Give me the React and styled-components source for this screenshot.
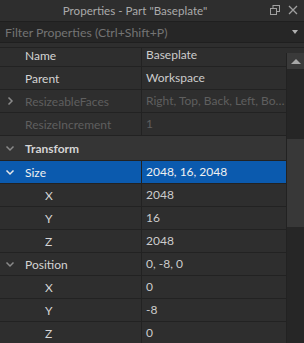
import React from 'react'
import styled, { createGlobalStyle } from 'styled-components'

const Global = createGlobalStyle`
  html, body { margin: 0; padding: 0; background: #2e2e2e; overflow: hidden; }
  body { font-family: Lato, "Noto Sans", sans-serif; }
`

const Panel = styled.div`
  width: 304px;
  height: 343px;
  display: flex;
  flex-direction: column;
  background: #2e2e2e;
  overflow: hidden;
`

const TitleBar = styled.div`
  height: 21px;
  flex: none;
  position: relative;
  display: flex;
  align-items: center;
  justify-content: center;
  padding-right: 34px;
  color: #aaaaaa;
  font-size: 11.6px;
  background: #2e2e2e;
`

const TitleIcons = styled.div`
  position: absolute;
  right: 6px;
  top: 5px;
  display: flex;
  gap: 8px;
`

const FilterBar = styled.div`
  height: 20px;
  flex: none;
  display: flex;
  align-items: center;
  justify-content: space-between;
  padding: 0 6px 0 5px;
  background: #262626;
  border-top: 1px solid #1f1f1f;
  border-bottom: 1px solid #1f1f1f;
  color: #747474;
  font-size: 12.3px;
`

const Caret = styled.div`
  width: 0;
  height: 0;
  border-left: 3px solid transparent;
  border-right: 3px solid transparent;
  border-top: 4px solid #b0b0b0;
`

const Body = styled.div`
  flex: 1;
  display: flex;
  margin-top: 4px;
  border-top: 1px solid #222;
  min-height: 0;
`

const List = styled.div`
  flex: 1;
  overflow: hidden;
`

const Scroll = styled.div`
  margin-top: -4px;
`

const Row = styled.div`
  display: grid;
  grid-template-columns: 142px minmax(0, 1fr);
  height: ${p => (p.$cat ? 24 : 22)}px;
  border-bottom: 1px solid #222222;
  background: ${p => (p.$selected ? '#0b5aae' : p.$cat ? '#353535' : '#2e2e2e')};
  font-size: 12px;
`

const NameCell = styled.div`
  display: flex;
  align-items: center;
  padding-left: ${p => p.$indent}px;
  border-right: 1px solid ${p => (p.$cat ? 'transparent' : '#222222')};
  color: ${p => (p.$selected ? '#f0f0f0' : p.$disabled ? '#5f5f5f' : '#d4d4d4')};
  font-weight: ${p => (p.$cat ? 700 : 400)};
  white-space: nowrap;
  position: relative;
`

const ValueCell = styled.div`
  line-height: 22px;
  padding-left: 4px;
  color: ${p => (p.$selected ? '#f0f0f0' : p.$disabled ? '#5f5f5f' : '#cccccc')};
  white-space: nowrap;
`

const Chevron = styled.span`
  position: absolute;
  left: 5px;
  top: 50%;
  transform: translateY(-50%);
  display: flex;
`

const ScrollBar = styled.div`
  width: 17px;
  flex: none;
  display: flex;
  flex-direction: column;
  background: #262626;
  border-left: 1px solid #222;
  margin-top: 5px;
`

const UpButton = styled.div`
  height: 16px;
  flex: none;
  background: #3a3a3a;
  display: flex;
  align-items: center;
  justify-content: center;
`

const UpTriangle = styled.div`
  width: 0;
  height: 0;
  border-left: 5px solid transparent;
  border-right: 5px solid transparent;
  border-bottom: 5px solid #a8a8a8;
`

const Track = styled.div`
  flex: 1;
  display: flex;
  flex-direction: column;
  padding-top: 70px;
`

const Thumb = styled.div`
  height: 88px;
  background: #383838;
`

const ChevronIcon = ({ open, color }) => (
  <svg width="10" height="10" viewBox="0 0 10 10">
    {open ? (
      <path d="M1.5 3.5 L5 7 L8.5 3.5" fill="none" stroke={color} strokeWidth="1.5" />
    ) : (
      <path d="M3.5 1.5 L7 5 L3.5 8.5" fill="none" stroke={color} strokeWidth="1.5" />
    )}
  </svg>
)

const rows = [
  { name: 'Name', value: 'Baseplate', indent: 25 },
  { name: 'Parent', value: 'Workspace', indent: 25 },
  { name: 'ResizeableFaces', value: 'Right, Top, Back, Left, Bo…', indent: 25, disabled: true, chevron: 'closed' },
  { name: 'ResizeIncrement', value: '1', indent: 25, disabled: true },
  { name: 'Transform', indent: 25, cat: true, chevron: 'open' },
  { name: 'Size', value: '2048, 16, 2048', indent: 25, selected: true, chevron: 'open' },
  { name: 'X', value: '2048', indent: 45 },
  { name: 'Y', value: '16', indent: 45 },
  { name: 'Z', value: '2048', indent: 45 },
  { name: 'Position', value: '0, -8, 0', indent: 25, chevron: 'open' },
  { name: 'X', value: '0', indent: 45 },
  { name: 'Y', value: '-8', indent: 45 },
  { name: 'Z', value: '0', indent: 45 },
]

export default function App() {
  return (
    <Panel>
      <Global />
      <TitleBar>
        Properties - Part "Baseplate"
        <TitleIcons>
          <svg width="10" height="10" viewBox="0 0 10 10">
            <rect x="3" y="0.5" width="6.5" height="6" fill="none" stroke="#a0a0a0" />
            <rect x="0.5" y="3.5" width="6" height="6" fill="#2e2e2e" stroke="#a0a0a0" />
          </svg>
          <svg width="10" height="10" viewBox="0 0 10 10">
            <path d="M1 1 L9 9 M9 1 L1 9" stroke="#a0a0a0" strokeWidth="1.3" />
          </svg>
        </TitleIcons>
      </TitleBar>
      <FilterBar>
        Filter Properties (Ctrl+Shift+P)
        <Caret />
      </FilterBar>
      <Body>
        <List>
          <Scroll>
            {rows.map((r, i) => (
              <Row key={i} $cat={r.cat} $selected={r.selected}>
                <NameCell
                  $indent={r.indent}
                  $cat={r.cat}
                  $selected={r.selected}
                  $disabled={r.disabled}
                >
                  {r.chevron && (
                    <Chevron>
                      <ChevronIcon
                        open={r.chevron === 'open'}
                        color={r.selected ? '#e8e8e8' : '#8a8a8a'}
                      />
                    </Chevron>
                  )}
                  {r.name}
                </NameCell>
                {!r.cat && (
                  <ValueCell $selected={r.selected} $disabled={r.disabled}>
                    {r.value}
                  </ValueCell>
                )}
              </Row>
            ))}
          </Scroll>
        </List>
        <ScrollBar>
          <UpButton>
            <UpTriangle />
          </UpButton>
          <Track>
            <Thumb />
          </Track>
        </ScrollBar>
      </Body>
    </Panel>
  )
}
